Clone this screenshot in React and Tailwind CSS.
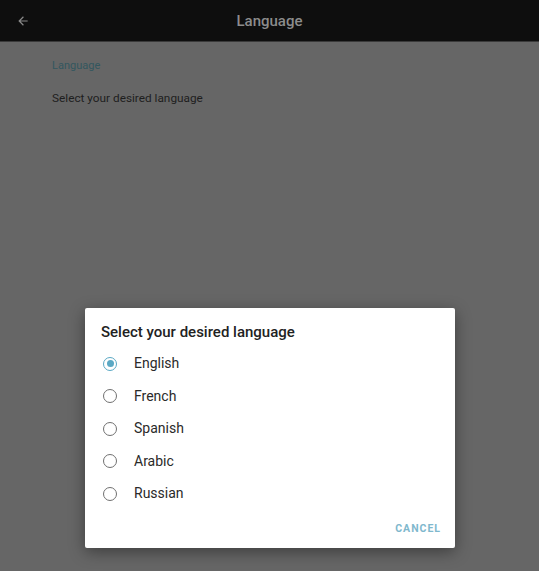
const languages = ["English", "French", "Spanish", "Arabic", "Russian"];

const App = () => {
  const selected = "English";

  return (
    <div
      className="relative w-[539px] h-[571px] overflow-hidden bg-[#666666]"
      style={{ fontFamily: "Roboto, 'Liberation Sans', sans-serif" }}
    >
      {/* Top bar */}
      <div className="flex items-center h-[42px] bg-[#0e0e0e] border-b border-[#3a3a3a] px-4">
        <svg width="14" height="14" viewBox="0 0 24 24" className="text-[#8a8a8a]">
          <path
            d="M20 11H7.83l5.59-5.59L12 4l-8 8 8 8 1.41-1.41L7.83 13H20v-2z"
            fill="currentColor"
          />
        </svg>
        <div className="flex-1 text-center text-[15px] font-medium text-[#8c8c8c] pr-[14px] pt-[2px]">
          Language
        </div>
      </div>

      {/* Preference list */}
      <div className="px-[52px] pt-[17px]">
        <p className="text-[11px] leading-[14px] text-[#33575f]">Language</p>
        <p className="mt-[17px] text-[11.8px] text-[#1e1e1e]">
          Select your desired language
        </p>
      </div>

      {/* Dialog */}
      <div className="absolute left-[85px] top-[308px] w-[370px] h-[240px] bg-white rounded-[2px] shadow-[0_4px_16px_rgba(0,0,0,0.4)]">
        <h2 className="pl-[16px] pt-[13px] text-[15px] font-medium text-[#222222]">
          Select your desired language
        </h2>
        <div className="mt-[4px]">
          {languages.map((lang) => (
            <div key={lang} className="flex items-center h-[32.5px] pl-[18px]">
              {lang === selected ? (
                <span className="flex items-center justify-center w-[14px] h-[14px] rounded-full border-[1.5px] border-[#5aa8c4]">
                  <span className="w-[7px] h-[7px] rounded-full bg-[#5aa8c4]" />
                </span>
              ) : (
                <span className="w-[14px] h-[14px] rounded-full border-[1.5px] border-[#707070]" />
              )}
              <span className="ml-[17px] text-[14px] text-[#2a2a2a]">{lang}</span>
            </div>
          ))}
        </div>
        <div className="absolute right-[14px] bottom-[11px] text-[10.5px] font-bold tracking-[1px] text-[#7fb8cd]">
          CANCEL
        </div>
      </div>
    </div>
  );
};

export default App;
